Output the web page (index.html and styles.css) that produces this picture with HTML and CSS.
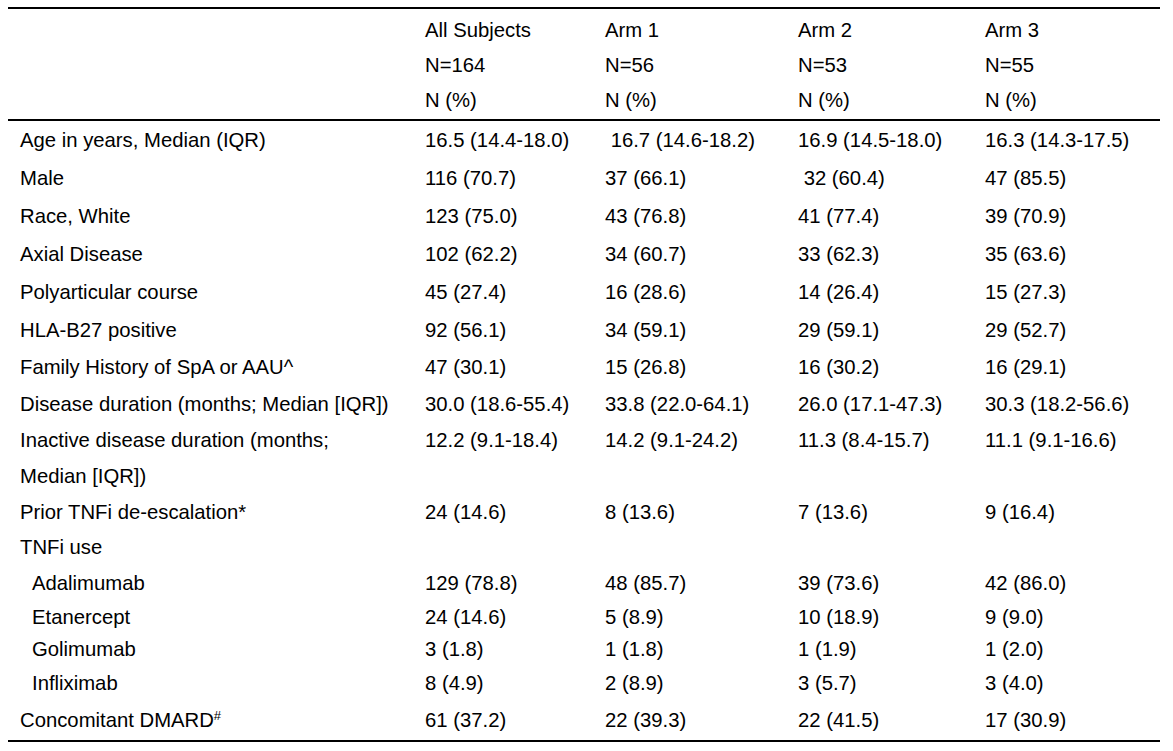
FILE: index.html
```html
<!DOCTYPE html>
<html lang="en">
<head>
<meta charset="utf-8">
<title>Baseline characteristics</title>
<link rel="stylesheet" href="styles.css">
</head>
<body>
<table class="demo">
  <colgroup>
    <col class="c-label">
    <col class="c-all">
    <col class="c-arm1">
    <col class="c-arm2">
    <col class="c-arm3">
  </colgroup>
  <thead>
    <tr class="h-first"><th></th><th>All Subjects</th><th>Arm 1</th><th>Arm 2</th><th>Arm 3</th></tr>
    <tr><th></th><th>N=164</th><th>N=56</th><th>N=53</th><th>N=55</th></tr>
    <tr class="h-last"><th></th><th>N (%)</th><th>N (%)</th><th>N (%)</th><th>N (%)</th></tr>
  </thead>
  <tbody>
    <tr><td>Age in years, Median (IQR)</td><td>16.5 (14.4-18.0)</td><td>&nbsp;16.7 (14.6-18.2)</td><td>16.9 (14.5-18.0)</td><td>16.3 (14.3-17.5)</td></tr>
    <tr><td>Male</td><td>116 (70.7)</td><td>37 (66.1)</td><td>&nbsp;32 (60.4)</td><td>47 (85.5)</td></tr>
    <tr><td>Race, White</td><td>123 (75.0)</td><td>43 (76.8)</td><td>41 (77.4)</td><td>39 (70.9)</td></tr>
    <tr><td>Axial Disease</td><td>102 (62.2)</td><td>34 (60.7)</td><td>33 (62.3)</td><td>35 (63.6)</td></tr>
    <tr><td>Polyarticular course</td><td>45 (27.4)</td><td>16 (28.6)</td><td>14 (26.4)</td><td>15 (27.3)</td></tr>
    <tr><td>HLA-B27 positive</td><td>92 (56.1)</td><td>34 (59.1)</td><td>29 (59.1)</td><td>29 (52.7)</td></tr>
    <tr class="r37"><td>Family History of SpA or AAU^</td><td>47 (30.1)</td><td>15 (26.8)</td><td>16 (30.2)</td><td>16 (29.1)</td></tr>
    <tr class="r36"><td>Disease duration (months; Median [IQR])</td><td>30.0 (18.6-55.4)</td><td>33.8 (22.0-64.1)</td><td>26.0 (17.1-47.3)</td><td>30.3 (18.2-56.6)</td></tr>
    <tr class="r36 two"><td>Inactive disease duration (months;<br>Median [IQR])</td><td>12.2 (9.1-18.4)</td><td>14.2 (9.1-24.2)</td><td>11.3 (8.4-15.7)</td><td>11.1 (9.1-16.6)</td></tr>
    <tr class="r36"><td>Prior TNFi de-escalation*</td><td>24 (14.6)</td><td>8 (13.6)</td><td>7 (13.6)</td><td>9 (16.4)</td></tr>
    <tr class="r35"><td>TNFi use</td><td></td><td></td><td></td><td></td></tr>
    <tr class="sub r36"><td>Adalimumab</td><td>129 (78.8)</td><td>48 (85.7)</td><td>39 (73.6)</td><td>42 (86.0)</td></tr>
    <tr class="sub r32"><td>Etanercept</td><td>24 (14.6)</td><td>5 (8.9)</td><td>10 (18.9)</td><td>9 (9.0)</td></tr>
    <tr class="sub r33"><td>Golimumab</td><td>3 (1.8)</td><td>1 (1.8)</td><td>1 (1.9)</td><td>1 (2.0)</td></tr>
    <tr class="sub r34"><td>Infliximab</td><td>8 (4.9)</td><td>2 (8.9)</td><td>3 (5.7)</td><td>3 (4.0)</td></tr>
    <tr class="last"><td>Concomitant DMARD<sup>#</sup></td><td>61 (37.2)</td><td>22 (39.3)</td><td>22 (41.5)</td><td>17 (30.9)</td></tr>
  </tbody>
</table>
</body>
</html>
```
FILE: styles.css
```css
html, body {
  background: #ffffff;
}
body {
  margin: 7px 13px 0 8px;
  font-family: "Liberation Sans", Arial, Helvetica, sans-serif;
  font-size: 20.3px;
  color: #000000;
}
.demo {
  width: 1152px;
  border-collapse: collapse;
  table-layout: fixed;
  border-top: 2px solid #000000;
  border-bottom: 2px solid #000000;
}
.c-label { width: 405px; }
.c-all { width: 180px; }
.c-arm1 { width: 193px; }
.c-arm2 { width: 187px; }
.c-arm3 { width: 187px; }
.demo th,
.demo td {
  padding: 0 0 0 12px;
  text-align: left;
  vertical-align: top;
  font-weight: normal;
  white-space: nowrap;
  line-height: 38px;
}
.demo th {
  line-height: 35px;
}
.demo thead tr.h-first th {
  padding-top: 4px;
}
.demo thead tr.h-last th {
  border-bottom: 2px solid #000000;
  padding-bottom: 1px;
}
.demo tr.r37 td { line-height: 37px; }
.demo tr.r36 td { line-height: 36px; }
.demo tr.r35 td { line-height: 35px; }
.demo tr.r34 td { line-height: 34px; }
.demo tr.r33 td { line-height: 33px; }
.demo tr.r32 td { line-height: 32px; }
.demo tbody tr.sub td:first-child {
  padding-left: 24px;
}
.demo tbody tr.last td {
  line-height: 40px;
}
.demo sup {
  font-size: 13px;
  line-height: 0;
  vertical-align: 7px;
}
```
